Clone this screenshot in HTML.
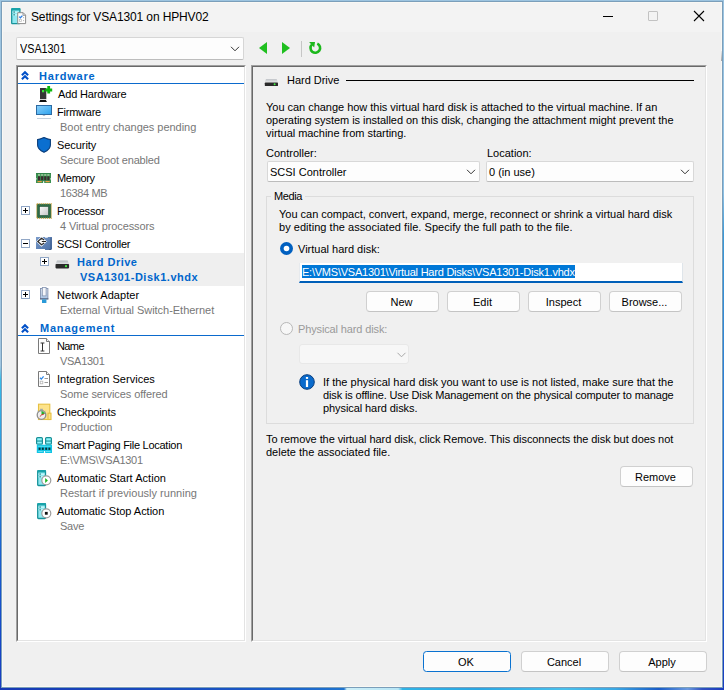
<!DOCTYPE html>
<html><head><meta charset="utf-8">
<style>
html,body{margin:0;padding:0;}
body{width:724px;height:690px;position:relative;overflow:hidden;background:#f0f0f0;font-family:"Liberation Sans",sans-serif;}
.a{position:absolute;}
.t{position:absolute;white-space:pre;font:11px/13px "Liberation Sans",sans-serif;color:#000;}
.g{color:#777;}
.b{font-weight:bold;color:#0066cc;letter-spacing:0.45px;}
.btn{position:absolute;box-sizing:border-box;background:#fdfdfd;border:1px solid #d0d0d0;border-bottom-color:#c4c4c4;border-radius:4px;font:11px/13px "Liberation Sans",sans-serif;text-align:center;}
.btn span{position:absolute;left:-2px;right:0;white-space:pre;}
.exp{position:absolute;box-sizing:border-box;width:9px;height:9px;border:1px solid #91a7c6;background:#fff;}
.exp:before{content:"";position:absolute;left:1px;top:3px;width:5px;height:1px;background:#000;}
.exp.p:after{content:"";position:absolute;left:3px;top:1px;width:1px;height:5px;background:#000;}
svg{position:absolute;overflow:visible;}
</style></head><body>

<!-- window frame -->
<div class="a" style="left:0;top:0;width:724px;height:690px;background:#9cc4e0"></div>
<div class="a" style="left:0;top:0;width:1px;height:690px;background:linear-gradient(#9cc4e0 0%,#a2c6e0 53%,#38bce8 55%,#2a9ae0 65%,#1a60d0 80%,#1448c8 92%,#1a3cc0 100%)"></div>
<div class="a" style="left:723px;top:0;width:1px;height:690px;background:linear-gradient(#9cc4e0 0%,#8cc0e4 28%,#3a9ad8 34%,#2a80d8 55%,#1a66d4 75%,#1a50c8 90%,#1a3cc0 100%)"></div>
<div class="a" style="left:0;top:688px;width:724px;height:2px;background:linear-gradient(90deg,#1638b4 0%,#1a55c4 33%,#1f74d0 47.5%,#cdeff8 47.9%,#b8e6f6 55%,#30b4e6 55.6%,#2aa6e2 66%,#48c0ec 78%,#3aa8e4 85%,#1a5cc8 91%,#6a9ae0 95%,#3050c0 97%,#1a3cc0 100%)"></div>
<div class="a" style="left:1px;top:1px;width:722px;height:687px;box-sizing:border-box;border:1px solid rgba(40,60,90,0.28)"></div>
<div class="a" style="left:2px;top:2px;width:720px;height:685px;background:#f0f0f0;box-sizing:border-box;border:1px solid #f9f8f4"></div>
<div class="a" style="left:3px;top:3px;width:718px;height:29px;background:#f3f3f3"></div>

<div class="a" style="left:721px;top:51px;width:1px;height:10px;background:linear-gradient(#eaeaea,#a4a4a4)"></div>
<!-- title bar -->
<svg style="left:11px;top:8px" width="16" height="16" viewBox="0 0 16 16">
  <rect x="0.7" y="0.7" width="8.2" height="15" rx="0.8" fill="#8fe8f0" stroke="#17939a" stroke-width="1.3"/>
  <rect x="0.3" y="0" width="9" height="2.4" rx="0.8" fill="#1aa3aa"/>
  <rect x="1.6" y="3.6" width="6" height="1.3" fill="#c8fafc"/>
  <rect x="1.6" y="6.2" width="6" height="1.3" fill="#c8fafc"/>
  <rect x="2.6" y="3.3" width="1" height="1.6" fill="#0e6d73"/>
  <rect x="2.6" y="5.9" width="1" height="1.6" fill="#0e6d73"/>
  <path d="M6.7 4.7H12.2L14.6 7.1V15.6H6.7Z" fill="#fff" stroke="#8c8c8c" stroke-width="1"/>
  <path d="M12 4.8V7.3H14.5" fill="none" stroke="#8c8c8c" stroke-width="0.9"/>
  <path d="M8.2 8.6L9.4 9.8L11.4 7.6" fill="none" stroke="#2b7de3" stroke-width="1.3"/>
  <rect x="8.4" y="11.4" width="2.2" height="2.2" fill="none" stroke="#c4c4c4" stroke-width="0.8"/>
  <circle cx="12.6" cy="9.6" r="0.6" fill="#b0b0b0"/><circle cx="12.6" cy="12.6" r="0.6" fill="#b0b0b0"/>
</svg>
<div class="t" style="left:31px;top:11px;font-size:12px;letter-spacing:-0.13px">Settings for VSA1301 on HPHV02</div>
<div class="a" style="left:603px;top:16px;width:10px;height:1px;background:#000"></div>
<div class="a" style="left:648px;top:11px;width:10px;height:10px;box-sizing:border-box;border:1px solid #c2c2c2;border-radius:1px"></div>
<svg style="left:694px;top:11px" width="10" height="10" viewBox="0 0 10 10"><path d="M0 0L10 10M10 0L0 10" stroke="#000" stroke-width="1.1"/></svg>

<!-- VM combo -->
<div class="a" style="left:16px;top:37px;width:228px;height:23px;box-sizing:border-box;background:#fdfdfd;border:1px solid #d6d6d6;border-bottom-color:#bdbdbd;border-radius:2px"></div>
<div class="t" style="left:20px;top:43px;font-size:12px;transform:scaleX(0.9);transform-origin:0 0">VSA1301</div>
<svg style="left:231px;top:46px" width="9" height="6" viewBox="0 0 9 6"><path d="M0 0.8L4 4.8L8 0.8" fill="none" stroke="#333" stroke-width="1"/></svg>

<!-- nav -->
<svg style="left:259px;top:42px" width="8" height="12" viewBox="0 0 8 12"><path d="M8 0V12L0 6Z" fill="#1fbf1f"/></svg>
<svg style="left:282px;top:42px" width="8" height="12" viewBox="0 0 8 12"><path d="M0 0V12L8 6Z" fill="#1fbf1f"/></svg>
<div class="a" style="left:301px;top:41px;width:1px;height:16px;background:#c6c6c6"></div>
<svg style="left:308px;top:41px" width="14" height="14" viewBox="0 0 14 14">
  <path d="M4.1 3.4 A4.8 4.8 0 1 0 9.3 2.6" fill="none" stroke="#1cb81c" stroke-width="2.6"/>
  <path d="M1.1 1.1 L7 1.1 L6.2 6.6 Z" fill="#1cb81c"/>
</svg>

<!-- left tree panel -->
<div class="a" style="left:16px;top:65px;width:230px;height:577px;box-sizing:border-box;border:1px solid;border-color:#a0a0a0 #fff #fff #a0a0a0"></div>
<div class="a" style="left:17px;top:66px;width:228px;height:575px;box-sizing:border-box;border:1px solid;border-color:#696969 #e3e3e3 #e3e3e3 #696969;background:#fff"></div>

<!-- right panel -->
<div class="a" style="left:251px;top:65px;width:456px;height:577px;box-sizing:border-box;border:1px solid;border-color:#a0a0a0 #fff #fff #a0a0a0"></div>
<div class="a" style="left:252px;top:66px;width:454px;height:575px;box-sizing:border-box;border:1px solid;border-color:#696969 #e3e3e3 #e3e3e3 #696969;background:#f0f0f0"></div>


<!-- TREE -->
<!-- Hardware header -->
<svg style="left:21px;top:71px" width="8" height="9" viewBox="0 0 8 9"><path d="M0.9 4.3L4 1.3L7.1 4.3M0.9 8.3L4 5.3L7.1 8.3" fill="none" stroke="#0050c8" stroke-width="2.1"/></svg>
<div class="t b" style="left:39px;top:70px;letter-spacing:0.800px">Hardware</div>
<div class="a" style="left:18px;top:83px;width:226px;height:1px;background:#0b6acd"></div>

<!-- Add Hardware -->
<svg style="left:39px;top:86px" width="14" height="17" viewBox="0 0 14 17">
  <rect x="1" y="2" width="6.3" height="11.2" fill="#353535"/>
  <path d="M1.2 14H6.8L8 16H0Z" fill="#111"/>
  <rect x="3" y="4" width="2.2" height="2.3" fill="#39e239"/>
  <path d="M8.3 0H11.1V2.4H13.2V5.4H11.1V7.5H8.3V5.4H6.3V2.4H8.3Z" fill="#0cb80c"/>
</svg>
<div class="t" style="left:58px;top:88px;letter-spacing:-0.164px">Add Hardware</div>

<!-- Firmware -->
<svg style="left:36px;top:105px" width="16" height="14" viewBox="0 0 16 14">
  <defs><linearGradient id="fw" x1="0" y1="0" x2="1" y2="1"><stop offset="0" stop-color="#8dd0fa"/><stop offset="1" stop-color="#2ba2ee"/></linearGradient></defs>
  <rect x="0.5" y="0.5" width="15" height="9" fill="url(#fw)" stroke="#2b6aa3"/>
  <rect x="6.8" y="10" width="2.4" height="1" fill="#b4c0cc"/>
  <rect x="1" y="13" width="14" height="1" fill="#c4d0dc"/>
</svg>
<div class="t" style="left:57px;top:106px;letter-spacing:-0.229px">Firmware</div>
<div class="t g" style="left:60px;top:121px;letter-spacing:-0.028px">Boot entry changes pending</div>

<!-- Security -->
<svg style="left:37px;top:137px" width="14" height="16" viewBox="0 0 14 16">
  <path d="M7 0.6C5.4 0.6 4.4 2.3 0.6 2.5V8C0.6 11.4 3.6 13.8 7 15.3C10.4 13.8 13.4 11.4 13.4 8V2.5C9.6 2.3 8.6 0.6 7 0.6Z" fill="#0b6fd0" stroke="#0a3d7a" stroke-width="1.1"/>
</svg>
<div class="t" style="left:57px;top:139px;letter-spacing:-0.071px">Security</div>
<div class="t g" style="left:60px;top:154px;letter-spacing:-0.156px">Secure Boot enabled</div>

<!-- Memory -->
<svg style="left:36px;top:173px" width="16" height="11" viewBox="0 0 16 11">
  <path d="M0 0H15V5.3H14.4V6.6H15V10H8.2V8.3H7.1V10H0V6.6H0.6V5.3H0Z" fill="#3b9152"/>
  <path d="M0 0H15V0.7H0Z" fill="#2e7f46"/>
  <rect x="2" y="1.3" width="2.2" height="1.3" fill="#b8d8b0"/><rect x="5.1" y="1.3" width="2.2" height="1.3" fill="#b8d8b0"/>
  <rect x="8.2" y="1.3" width="2.2" height="1.3" fill="#b8d8b0"/><rect x="11.3" y="1.3" width="2.2" height="1.3" fill="#b8d8b0"/>
  <rect x="2" y="3.3" width="2.2" height="4" fill="#3b2a2e"/><rect x="5.1" y="3.3" width="2.2" height="4" fill="#3b2a2e"/>
  <rect x="8.2" y="3.3" width="2.2" height="4" fill="#3b2a2e"/><rect x="11.3" y="3.3" width="2.2" height="4" fill="#3b2a2e"/>
  <rect x="1.5" y="8" width="4.2" height="1.2" fill="#f0a040"/><rect x="9.5" y="8" width="4.2" height="1.2" fill="#f0a040"/>
</svg>
<div class="t" style="left:57px;top:172px;letter-spacing:-0.320px">Memory</div>
<div class="t g" style="left:60px;top:187px;letter-spacing:-0.357px">16384 MB</div>

<!-- Processor -->
<div class="exp p" style="left:21px;top:206px"></div>
<svg style="left:36px;top:203px" width="16" height="16" viewBox="0 0 16 16">
  <rect x="0.8" y="0.8" width="14.4" height="14.4" fill="#2e6b48" stroke="#d8a030" stroke-width="1.2" stroke-dasharray="1 1"/>
  <rect x="1.6" y="1.6" width="12.8" height="12.8" fill="#2e6b48"/>
  <defs><linearGradient id="cp" x1="0" y1="0" x2="1" y2="1"><stop offset="0" stop-color="#fafafa"/><stop offset="1" stop-color="#c4c4c4"/></linearGradient></defs>
  <rect x="3.5" y="3.5" width="9" height="9" fill="url(#cp)" stroke="#1f4f33" stroke-width="0.6"/>
</svg>
<div class="t" style="left:57px;top:205px;letter-spacing:-0.225px">Processor</div>
<div class="t g" style="left:60px;top:220px;letter-spacing:-0.137px">4 Virtual processors</div>

<!-- SCSI -->
<div class="exp" style="left:21px;top:239px"></div>
<svg style="left:36px;top:237px" width="16" height="13" viewBox="0 0 16 13">
  <defs><linearGradient id="sc" x1="0" y1="0" x2="1" y2="1"><stop offset="0" stop-color="#7b9ccb"/><stop offset="1" stop-color="#4a6fa6"/></linearGradient></defs>
  <path d="M0 0H9V0.8H11.8V0H16V12H12.2V13H9V12H0Z" fill="url(#sc)"/>
  <path d="M15 0.5V12M12.2 12.5H15.5" stroke="#3c5a88" stroke-width="1"/>
  <path d="M0.2 4.5L5.5 -0.8L10.8 4.5L5.5 9.8Z" fill="#fff"/>
  <path d="M8.2 2.9L5.5 1.3L1.8 4.5L5.5 7.7L8.2 6.1M5.8 4.5H10" fill="none" stroke="#262626" stroke-width="1.15"/>
</svg>
<div class="t" style="left:57px;top:238px;letter-spacing:-0.207px">SCSI Controller</div>

<!-- Hard Drive (selected) -->
<div class="a" style="left:19px;top:253px;width:225px;height:33px;background:#efefef"></div>
<div class="exp p" style="left:40px;top:257px"></div>
<svg style="left:55px;top:260px" width="15" height="10" viewBox="0 0 15 10">
  <defs><linearGradient id="hd1" x1="0" y1="0" x2="0" y2="1"><stop offset="0" stop-color="#b4b9be"/><stop offset="1" stop-color="#e0e2e4"/></linearGradient></defs>
  <path d="M2 0.5H12.6L14 4H0.6Z" fill="url(#hd1)"/>
  <rect x="0.5" y="4" width="13.6" height="4.4" rx="0.8" fill="#2a2a2a"/>
  <circle cx="11" cy="6.2" r="1.1" fill="#44ee44"/>
</svg>
<div class="t b" style="left:77px;top:256px;letter-spacing:0.483px">Hard Drive</div>
<div class="t b" style="left:80px;top:271px;letter-spacing:0.518px">VSA1301-Disk1.vhdx</div>

<!-- Network Adapter -->
<div class="exp p" style="left:21px;top:290px"></div>
<svg style="left:39px;top:287px" width="10" height="16" viewBox="0 0 10 16">
  <defs><linearGradient id="na" x1="0" y1="0" x2="0" y2="1"><stop offset="0" stop-color="#dfe6f0"/><stop offset="1" stop-color="#a9c4e6"/></linearGradient></defs>
  <rect x="1.5" y="1.5" width="7.4" height="10.4" fill="url(#na)" stroke="#8393b0" stroke-width="0.9"/>
  <rect x="3.3" y="0.4" width="3.8" height="8.5" fill="#f4f6fa" stroke="#8393b0" stroke-width="0.8"/>
  <rect x="1" y="11.4" width="8.4" height="1" fill="#4a5a78"/>
  <rect x="3" y="12.4" width="4.4" height="3.6" fill="#2a9ad8"/>
</svg>
<div class="t" style="left:57px;top:289px;letter-spacing:0.057px">Network Adapter</div>
<div class="t g" style="left:60px;top:304px;letter-spacing:-0.029px">External Virtual Switch-Ethernet</div>

<!-- Management header -->
<svg style="left:21px;top:324px" width="8" height="9" viewBox="0 0 8 9"><path d="M0.9 4.3L4 1.3L7.1 4.3M0.9 8.3L4 5.3L7.1 8.3" fill="none" stroke="#0050c8" stroke-width="2.1"/></svg>
<div class="t b" style="left:40px;top:322px;letter-spacing:0.794px">Management</div>
<div class="a" style="left:18px;top:335px;width:226px;height:1px;background:#0b6acd"></div>

<!-- Name -->
<svg style="left:38px;top:338px" width="13" height="16" viewBox="0 0 13 16">
  <path d="M0.5 0.5H8.5L11.5 3.5V15.5H0.5Z" fill="#fff" stroke="#7a7a7a"/>
  <path d="M8.5 0.5V3.5H11.5" fill="#f4f4f4" stroke="#7a7a7a"/>
  <path d="M2.6 5H6.4M4.5 5V13M2.6 13H6.4" fill="none" stroke="#333" stroke-width="1"/>
</svg>
<div class="t" style="left:57px;top:340px;letter-spacing:-0.600px">Name</div>
<div class="t g" style="left:60px;top:355px;letter-spacing:-0.283px">VSA1301</div>

<!-- Integration Services -->
<svg style="left:38px;top:371px" width="13" height="16" viewBox="0 0 13 16">
  <path d="M0.5 0.5H8.5L11.5 3.5V15.5H0.5Z" fill="#fff" stroke="#7a7a7a"/>
  <path d="M8.5 0.5V3.5H11.5" fill="#f4f4f4" stroke="#7a7a7a"/>
  <path d="M2 6.8L3.3 8.1L5.6 5.3" fill="none" stroke="#2a86e8" stroke-width="1.3"/>
  <path d="M6.5 7.5H10M6.5 11.5H10" stroke="#9a9a9a" stroke-width="1"/>
  <rect x="2.2" y="10.2" width="2.6" height="2.6" fill="none" stroke="#b4b4b4" stroke-width="0.8"/>
</svg>
<div class="t" style="left:57px;top:373px;letter-spacing:0.032px">Integration Services</div>
<div class="t g" style="left:60px;top:388px;letter-spacing:-0.075px">Some services offered</div>

<!-- Checkpoints -->
<svg style="left:37px;top:403px" width="15" height="17" viewBox="0 0 15 17">
  <rect x="1.5" y="1.2" width="11.3" height="15.3" fill="#fde38a" stroke="#e6c043" stroke-width="1.1"/>
  <rect x="11" y="10.2" width="3" height="6.3" fill="#fde38a" stroke="#e6c043" stroke-width="1.1"/>
  <circle cx="4.5" cy="12" r="4.3" fill="#efefef" stroke="#8e8e8e" stroke-width="1.3"/>
  <path d="M3 6.3H6M4.5 6.3V7.6M0.6 8.2L1.6 9M8.4 8.2L7.4 9" stroke="#9aa4ae" stroke-width="1"/>
  <path d="M4.5 12V7.8L8.3 10.2Z" fill="#1fb52a"/>
  <path d="M4.5 12L2.8 13.6M4.5 12L7.2 10.9" stroke="#d42020" stroke-width="0.9"/>
</svg>
<div class="t" style="left:57px;top:406px;letter-spacing:-0.160px">Checkpoints</div>
<div class="t g" style="left:60px;top:421px;letter-spacing:-0.022px">Production</div>

<!-- Smart Paging -->
<svg style="left:36px;top:437px" width="16" height="16" viewBox="0 0 16 16">
  <rect x="0.6" y="0.6" width="5.8" height="6.6" rx="1" fill="#8ff4fb" stroke="#1a8f96" stroke-width="1.2"/>
  <rect x="9.6" y="0.6" width="5.8" height="6.6" rx="1" fill="#8ff4fb" stroke="#1a8f96" stroke-width="1.2"/>
  <rect x="0.6" y="3.5" width="5.8" height="1.1" fill="#1a8f96"/>
  <rect x="9.6" y="3.5" width="5.8" height="1.1" fill="#1a8f96"/>
  <path d="M0.8 7.7H16V16H9.2V14H7.9V16H0.8Z" fill="#12c4e4"/>
  <rect x="2.6" y="10.6" width="2" height="2.3" fill="#06323a"/>
  <rect x="5.8" y="10.6" width="2" height="2.3" fill="#06323a"/>
  <rect x="9.2" y="10.6" width="2" height="2.3" fill="#06323a"/>
  <rect x="12.4" y="10.6" width="2" height="2.3" fill="#06323a"/>
  <rect x="2" y="8.8" width="12.5" height="1" fill="#4fe2f6"/>
  <rect x="2.2" y="14.2" width="4.5" height="0.8" fill="#7fe8f6"/>
  <rect x="10" y="14.2" width="4.5" height="0.8" fill="#7fe8f6"/>
</svg>
<div class="t" style="left:57px;top:439px;letter-spacing:-0.272px">Smart Paging File Location</div>
<div class="t g" style="left:60px;top:454px;letter-spacing:-0.292px">E:\VMS\VSA1301</div>

<!-- Automatic Start -->
<svg style="left:37px;top:470px" width="15" height="16" viewBox="0 0 15 16">
  <rect x="0.7" y="0.7" width="7.8" height="14.8" rx="0.8" fill="#8fe8f0" stroke="#17939a" stroke-width="1.3"/>
  <rect x="0.3" y="0" width="8.6" height="2.4" rx="0.8" fill="#1aa3aa"/>
  <rect x="1.6" y="3.6" width="5.8" height="1.3" fill="#c8fafc"/>
  <rect x="1.6" y="6.2" width="5.8" height="1.3" fill="#c8fafc"/>
  <rect x="2.6" y="3.3" width="1" height="1.6" fill="#0e6d73"/>
  <rect x="2.6" y="5.9" width="1" height="1.6" fill="#0e6d73"/>
  <circle cx="9.3" cy="10.3" r="4.5" fill="#fff" stroke="#9c9c9c" stroke-width="1.2"/>
  <path d="M8.2 7.9V12.9L10.9 10.4Z" fill="#18b418"/>
</svg>
<div class="t" style="left:57px;top:472px;letter-spacing:0.033px">Automatic Start Action</div>
<div class="t g" style="left:60px;top:487px;letter-spacing:0.021px">Restart if previously running</div>

<!-- Automatic Stop -->
<svg style="left:37px;top:503px" width="15" height="16" viewBox="0 0 15 16">
  <rect x="0.7" y="0.7" width="7.8" height="14.8" rx="0.8" fill="#8fe8f0" stroke="#17939a" stroke-width="1.3"/>
  <rect x="0.3" y="0" width="8.6" height="2.4" rx="0.8" fill="#1aa3aa"/>
  <rect x="1.6" y="3.6" width="5.8" height="1.3" fill="#c8fafc"/>
  <rect x="1.6" y="6.2" width="5.8" height="1.3" fill="#c8fafc"/>
  <rect x="2.6" y="3.3" width="1" height="1.6" fill="#0e6d73"/>
  <rect x="2.6" y="5.9" width="1" height="1.6" fill="#0e6d73"/>
  <circle cx="9.3" cy="10.3" r="4.5" fill="#fff" stroke="#9c9c9c" stroke-width="1.2"/>
  <rect x="7.9" y="8.9" width="2.8" height="2.8" fill="#111"/>
</svg>
<div class="t" style="left:57px;top:505px;letter-spacing:-0.015px">Automatic Stop Action</div>
<div class="t g" style="left:60px;top:520px;letter-spacing:-0.267px">Save</div>


<!-- RIGHT PANEL -->
<svg style="left:264px;top:78px" width="15" height="10" viewBox="0 0 15 10">
  <defs><linearGradient id="hd2" x1="0" y1="0" x2="0" y2="1"><stop offset="0" stop-color="#c0c4c8"/><stop offset="1" stop-color="#e8e9ea"/></linearGradient></defs>
  <path d="M2 1H12.6L14 4.5H0.6Z" fill="url(#hd2)"/>
  <rect x="0.8" y="4.5" width="13.2" height="3.6" rx="0.7" fill="#2a2a2a"/>
  <circle cx="10.6" cy="6.3" r="1" fill="#44ee44"/>
</svg>
<div class="t" style="left:287px;top:74px;letter-spacing:-0.033px">Hard Drive</div>
<div class="a" style="left:346px;top:80px;width:348px;height:1px;background:#000"></div>

<div class="t" style="left:266px;top:101px;letter-spacing:-0.026px">You can change how this virtual hard disk is attached to the virtual machine. If an</div>
<div class="t" style="left:266px;top:114px;letter-spacing:-0.040px">operating system is installed on this disk, changing the attachment might prevent the</div>
<div class="t" style="left:266px;top:127px;letter-spacing:-0.031px">virtual machine from starting.</div>

<div class="t" style="left:266px;top:147px">Controller:</div>
<div class="a" style="left:267px;top:161px;width:213px;height:21px;box-sizing:border-box;background:#fdfdfd;border:1px solid #d8d8d8;border-bottom-color:#bcbcbc;border-radius:2px"></div>
<div class="t" style="left:270px;top:166px">SCSI Controller</div>
<svg style="left:467px;top:169px" width="9" height="6" viewBox="0 0 9 6"><path d="M0 0.8L4 4.8L8 0.8" fill="none" stroke="#333" stroke-width="1"/></svg>

<div class="t" style="left:487px;top:147px">Location:</div>
<div class="a" style="left:486px;top:161px;width:208px;height:21px;box-sizing:border-box;background:#fdfdfd;border:1px solid #d8d8d8;border-bottom-color:#bcbcbc;border-radius:2px"></div>
<div class="t" style="left:489px;top:166px">0 (in use)</div>
<svg style="left:681px;top:169px" width="9" height="6" viewBox="0 0 9 6"><path d="M0 0.8L4 4.8L8 0.8" fill="none" stroke="#333" stroke-width="1"/></svg>

<!-- Media group -->
<div class="a" style="left:266px;top:196px;width:428px;height:228px;box-sizing:border-box;border:1px solid #dcdcdc"></div>
<div class="a" style="left:271px;top:195px;width:34px;height:3px;background:#f0f0f0"></div>
<div class="t" style="left:274px;top:190px;letter-spacing:-0.375px">Media</div>
<div class="t" style="left:279px;top:208px;letter-spacing:-0.017px">You can compact, convert, expand, merge, reconnect or shrink a virtual hard disk</div>
<div class="t" style="left:279px;top:221px;letter-spacing:0.038px">by editing the associated file. Specify the full path to the file.</div>

<svg style="left:280px;top:242px" width="13" height="13" viewBox="0 0 13 13"><circle cx="6.5" cy="6.5" r="6.5" fill="#0060c0"/><circle cx="6.5" cy="6.5" r="2.8" fill="#fff"/></svg>
<div class="t" style="left:298px;top:243px">Virtual hard disk:</div>

<div class="a" style="left:299px;top:263px;width:384px;height:20px;box-sizing:border-box;background:#fff;border-left:1px solid #e6eaee;border-right:1px solid #dfe5ea;border-bottom:2px solid #005fb8"></div>
<div class="a" style="left:302px;top:265px;width:273px;height:13px;background:#0078d7"></div>
<div class="t" style="left:302px;top:266px;color:#fff;letter-spacing:-0.23px">E:\VMS\VSA1301\Virtual Hard Disks\VSA1301-Disk1.vhdx</div>

<div class="btn" style="left:366px;top:291px;width:73px;height:21px"><span style="top:4px">New</span></div>
<div class="btn" style="left:447px;top:291px;width:73px;height:21px"><span style="top:4px">Edit</span></div>
<div class="btn" style="left:528px;top:291px;width:73px;height:21px"><span style="top:4px">Inspect</span></div>
<div class="btn" style="left:609px;top:291px;width:73px;height:21px"><span style="top:4px">Browse...</span></div>

<svg style="left:280px;top:322px" width="13" height="13" viewBox="0 0 13 13"><circle cx="6.5" cy="6.5" r="6" fill="#f7f7f7" stroke="#b8b8b8" stroke-width="1"/></svg>
<div class="t" style="left:298px;top:323px;color:#9a9a9a;letter-spacing:-0.133px">Physical hard disk:</div>
<div class="a" style="left:299px;top:344px;width:110px;height:20px;box-sizing:border-box;background:#f7f7f7;border:1px solid #e8e8e8;border-radius:3px"></div>
<svg style="left:397px;top:352px" width="9" height="6" viewBox="0 0 9 6"><path d="M0.5 0.8L4.5 4.8L8.5 0.8" fill="none" stroke="#a8a8a8" stroke-width="1"/></svg>

<svg style="left:299px;top:374px" width="16" height="16" viewBox="0 0 16 16"><circle cx="8" cy="8" r="7.3" fill="#0b6bcc" stroke="#0a3f7f" stroke-width="1"/><rect x="6.9" y="6.2" width="2.2" height="6.8" fill="#fff"/><rect x="6.9" y="3" width="2.2" height="1.9" fill="#fff"/></svg>
<div class="t" style="left:323px;top:376px;letter-spacing:-0.000px">If the physical hard disk you want to use is not listed, make sure that the</div>
<div class="t" style="left:323px;top:389px;letter-spacing:-0.140px">disk is offline. Use Disk Management on the physical computer to manage</div>
<div class="t" style="left:323px;top:402px;letter-spacing:-0.079px">physical hard disks.</div>

<div class="t" style="left:266px;top:433px;letter-spacing:-0.077px">To remove the virtual hard disk, click Remove. This disconnects the disk but does not</div>
<div class="t" style="left:266px;top:446px;letter-spacing:0.004px">delete the associated file.</div>
<div class="btn" style="left:620px;top:466px;width:73px;height:21px"><span style="top:4px">Remove</span></div>

<!-- bottom buttons -->
<div class="btn" style="left:423px;top:651px;width:88px;height:21px;border:1.5px solid #0a72d0;border-radius:3.5px"><span style="top:4px">OK</span></div>
<div class="btn" style="left:521px;top:651px;width:88px;height:21px"><span style="top:4px">Cancel</span></div>
<div class="btn" style="left:619px;top:651px;width:88px;height:21px"><span style="top:4px">Apply</span></div>

</body></html>
